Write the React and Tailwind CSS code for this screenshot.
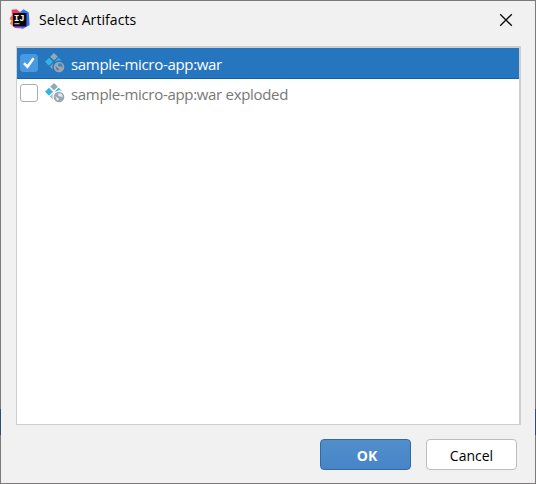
function IdeaLogo() {
  return (
    <svg width="22" height="22" viewBox="0 0 22 22" className="shrink-0">
      <defs>
        <linearGradient id="warm" x1="0" y1="0" x2="0" y2="1">
          <stop offset="0" stopColor="#f52b70" />
          <stop offset="0.5" stopColor="#fb5a45" />
          <stop offset="1" stopColor="#fb8b25" />
        </linearGradient>
        <linearGradient id="cool" x1="0" y1="0" x2="1" y2="1">
          <stop offset="0" stopColor="#2a7cf0" />
          <stop offset="1" stopColor="#3c63ea" />
        </linearGradient>
      </defs>
      <path d="M2.6 0.8 7.5 0.3 12 4 10 17 5 17.5 0.8 14.5 2.6 12 0.6 9.5 3 6Z" fill="url(#warm)" />
      <path d="M11 3 14.5 0.2 19.8 3.6 20.6 16 14 19.8 9 18Z" fill="url(#cool)" />
      <path d="M3 16 11 16 14 19.5 6 19Z" fill="#a34be0" />
      <rect x="4" y="4" width="13.4" height="13.4" fill="#080808" />
      <text x="5" y="11.8" fontFamily="Liberation Mono, monospace" fontSize="8.8" fontWeight="700" fill="#fff">IJ</text>
      <rect x="5.5" y="14.2" width="5" height="1" fill="#ddd" />
    </svg>
  );
}

function ArtifactIcon({ selected }) {
  return (
    <svg width="20" height="20" viewBox="0 0 20 20" className="ml-[7px] shrink-0">
      <path d="M9 0 12.8 3.8 9 7.6 5.2 3.8Z" fill="#9aa7b0" />
      <path d="M4 4.8 8 8.8 4 12.8 0 8.8Z" fill="#36b3e0" />
      <path d="M10 8.2 13.6 4.8 17 8A6 6 0 0 0 10.4 8.8Z" fill="#36b3e0" />
      <path d="M8.8 9.8A6 6 0 0 0 8 16.4L5 13.4Z" fill="#9aa7b0" />
      <circle cx="14" cy="14" r="5.3" fill="#9aa7b0" />
      <path
        d="M10 12.6 12.6 15 14 15.8 13.2 17.8 11.4 16.6 11 14.6Z M13.4 10.2 16 10.4 17.6 12.6 17.4 14.4 15.8 13.6 14.2 13.4 13 12.2Z"
        fill={selected ? "#2675bf" : "#fff"}
        fillOpacity="0.75"
      />
    </svg>
  );
}

function ArtifactRow({ label, selected }) {
  return (
    <div className={`flex items-center pl-[3px] ${selected ? "h-[31px] border-b border-[#0e62b0] bg-[#2675bf] text-white" : "h-[28px] text-[#787878]"}`}>
      <div className={`flex size-[18px] shrink-0 items-center justify-center rounded-[3px] border ${selected ? "border-[#4c97df] bg-[#4998e2]" : "border-[#adadad] bg-white"}`}>
        {selected && (
          <svg width="14" height="14" viewBox="0 0 14 14" className="shrink-0">
            <path d="M2 7.2 5.4 10.8 11.6 2.2" fill="none" stroke="#fff" strokeWidth="2.5" />
          </svg>
        )}
      </div>
      <ArtifactIcon selected={selected} />
      <span className="ml-[6px] pt-[2px] text-[15px] leading-5 tracking-[-0.31px] whitespace-pre">{label}</span>
    </div>
  );
}

export default function App() {
  return (
    <div className="h-[484px] w-[536px] bg-[linear-gradient(to_bottom,#7c7a7b_409px,#2f4e76_409px,#2f4e76_435px,#7c7a7b_435px)] p-px font-['Open_Sans','Noto_Sans',sans-serif]">
      <div className="flex h-full flex-col bg-[#f1f1f1]">
        <header className="flex h-[45px] items-center pr-[22px] pb-[7px] pl-[8px]">
          <IdeaLogo />
          <h1 className="ml-[8px] flex-1 text-[14px] leading-5 tracking-[0.06px] text-black">Select Artifacts</h1>
          <svg width="14" height="14" viewBox="0 0 14 14">
            <path d="M1.2 1.2 12.8 12.8M12.8 1.2 1.2 12.8" fill="none" stroke="#111" strokeWidth="1.35" />
          </svg>
        </header>
        <main className="mr-[14px] ml-[15px] h-[379px] border border-t-2 border-r-2 border-[#cfcfcf] bg-white">
          <ArtifactRow label="sample-micro-app:war" selected />
          <ArtifactRow label="sample-micro-app:war exploded" />
        </main>
        <footer className="mt-[14px] mr-[18px] flex justify-end gap-[15px] text-[14px]">
          <button className="h-[31px] w-[91px] rounded-[4px] border border-[#2f6aab] bg-linear-to-b from-[#528ecb] to-[#4785c7] pt-px pl-[3px] font-bold text-white">OK</button>
          <button className="h-[31px] w-[91px] rounded-[4px] border border-[#bdbdbd] bg-white pt-px text-black">Cancel</button>
        </footer>
      </div>
    </div>
  );
}
